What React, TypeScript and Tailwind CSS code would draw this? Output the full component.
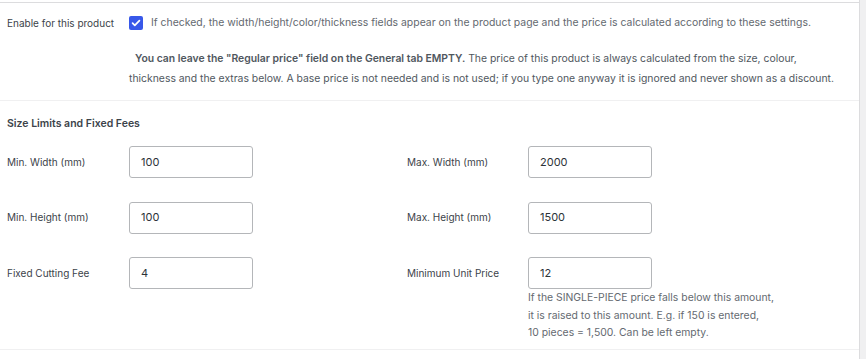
import React from 'react';

const font = { fontFamily: 'Inter, "Liberation Sans", Arial, sans-serif' };

function Field({ label, value }: { label: string; value: string }) {
  return (
    <>
      <div className="flex items-center text-[10px] text-[#3c434a]">{label}</div>
      <div className="flex h-[32px] items-center rounded-[3px] border border-[#b4b6b9] bg-white px-[11px] text-[11px] text-[#2c3338]">
        {value}
      </div>
    </>
  );
}

export default function App() {
  return (
    <div className="flex h-[359px] w-[866px] bg-white" style={font}>
      <div className="flex-1 min-w-0">
        <div className="mt-[2px] border-t border-[#dcdcde]">
          <div className="border-b border-[#f0f0f1] pl-[7px] pt-[10px] pb-[11px]">
            <div className="flex h-[20px] items-center">
              <div className="w-[122px] text-[10px] text-[#3c434a]">Enable for this product</div>
              <span className="flex h-[14px] w-[14px] items-center justify-center rounded-[2px] bg-[#3858e9]">
                <svg viewBox="0 0 14 14" className="h-[12px] w-[12px]">
                  <path d="M3 7.2l2.6 2.6L11 4.2" fill="none" stroke="#fff" strokeWidth="2" strokeLinecap="round" strokeLinejoin="round" />
                </svg>
              </span>
              <span className="ml-[8px] whitespace-nowrap text-[10.45px] text-[#646970]">
                If checked, the width/height/color/thickness fields appear on the product page and the price is calculated according to these settings.
              </span>
            </div>
            <p className="mt-[16px] ml-[122px] whitespace-nowrap indent-[6px] text-[10.4px] leading-[20px] text-[#50575e]">
              <strong className="font-semibold">You can leave the "Regular price" field on the General tab EMPTY.</strong> The price of this product is always calculated from the size, colour,
              <br />
              thickness and the extras below. A base price is not needed and is not used; if you type one anyway it is ignored and never shown as a discount.
            </p>
          </div>
          <div className="border-b border-[#f0f0f1] px-[7px] pt-[13px] pb-[7px]">
            <h3 className="h-[20px] text-[10.5px] font-semibold leading-[20px] text-[#3c434a]">Size Limits and Fixed Fees</h3>
            <div className="mt-[12px] grid grid-cols-[122px_124px_154px_121px_124px] grid-rows-[32px_32px_32px] gap-y-[23.5px]">
              <Field label="Min. Width (mm)" value="100" />
              <div />
              <Field label="Max. Width (mm)" value="2000" />
              <Field label="Min. Height (mm)" value="100" />
              <div />
              <Field label="Max. Height (mm)" value="1500" />
              <Field label="Fixed Cutting Fee" value="4" />
              <div />
              <Field label="Minimum Unit Price" value="12" />
            </div>
            <div className="ml-[521px] whitespace-nowrap text-[10.4px] leading-[17.5px] text-[#646970]">
              If the SINGLE-PIECE price falls below this amount,
              <br />
              it is raised to this amount. E.g. if 150 is entered,
              <br />
              10 pieces = 1,500. Can be left empty.
            </div>
          </div>
        </div>
      </div>
      <div className="w-[7px] border-l border-[#dcdcde] bg-[#f0f0f1]" />
    </div>
  );
}
